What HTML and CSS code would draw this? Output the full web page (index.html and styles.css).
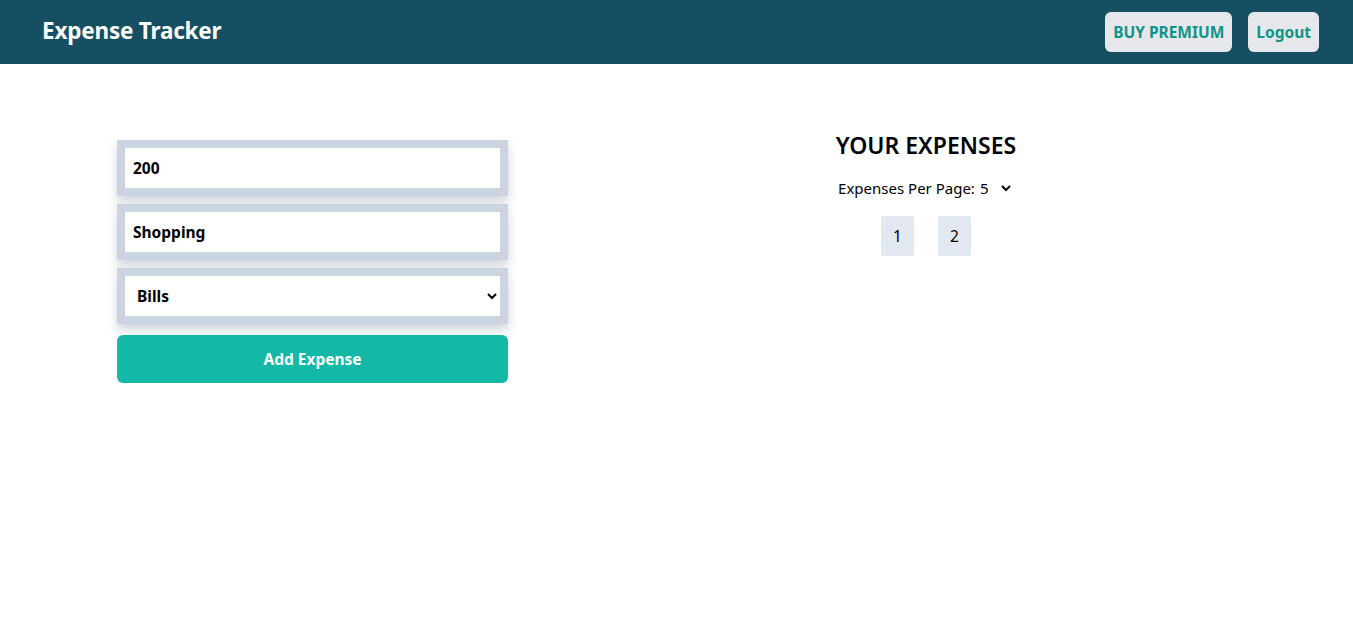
FILE: index.html
```html
<!DOCTYPE html>
<html lang="en">
<head>
<meta charset="utf-8">
<title>Expense Tracker</title>
<link rel="stylesheet" href="styles.css">
</head>
<body>
<header class="topbar">
  <h1 class="brand">Expense Tracker</h1>
  <div class="actions">
    <button class="nav-btn">BUY PREMIUM</button>
    <button class="nav-btn">Logout</button>
  </div>
</header>
<main class="content">
  <form class="expense-form">
    <div class="field"><input class="field-input" type="text" value="200"></div>
    <div class="field"><input class="field-input" type="text" value="Shopping"></div>
    <div class="field">
      <select class="field-input field-select">
        <option>Bills</option>
        <option>Food</option>
        <option>Shopping</option>
      </select>
    </div>
    <button type="button" class="add-btn">Add Expense</button>
  </form>
  <section class="expenses">
    <h2 class="expenses-title">YOUR EXPENSES</h2>
    <label class="per-page">Expenses Per Page:<select class="per-page-select">
        <option>5</option>
        <option>10</option>
      </select></label>
    <div class="pager">
      <button class="page-btn">1</button>
      <button class="page-btn">2</button>
    </div>
  </section>
</main>
</body>
</html>
```

FILE: styles.css
```css
* { box-sizing: border-box; }
body {
  margin: 0;
  font-family: "Noto Sans", "Open Sans", sans-serif;
  color: #000;
  background: #fff;
}
.topbar {
  height: 64px;
  background: #174f62;
  display: flex;
  align-items: center;
  justify-content: space-between;
  padding: 0 34px 0 42px;
}
.brand {
  margin: 0;
  color: #fff;
  font-size: 22.5px;
  font-weight: 700;
  letter-spacing: -0.2px;
  margin-top: -4px;
}
.actions {
  display: flex;
  gap: 16px;
}
.nav-btn {
  height: 40px;
  padding: 0 8px;
  border: none;
  border-radius: 6px;
  background: #e5e7eb;
  color: #0f9488;
  font-family: inherit;
  font-size: 15.5px;
  font-weight: 700;
}
.content {
  display: flex;
  padding: 76px 9px 0 117px;
}
.expense-form {
  width: 391px;
  display: flex;
  flex-direction: column;
  gap: 8px;
}
.field {
  background: #cbd5e1;
  padding: 8px;
  box-shadow: 0 6px 10px rgba(100, 116, 139, 0.3);
}
.field-input {
  display: block;
  width: 100%;
  height: 40px;
  border: none;
  outline: none;
  padding: 0 8px;
  font-family: inherit;
  font-size: 15.5px;
  font-weight: 700;
  color: #000;
  background: #fff;
}
.field-select {
  padding: 0 6px 0 8px;
}
.add-btn {
  margin-top: 3px;
  height: 48px;
  border: none;
  border-radius: 6px;
  background: #14b8a6;
  color: #fff;
  font-family: inherit;
  font-size: 15.5px;
  font-weight: 700;
}
.expenses {
  flex: 1;
  display: flex;
  flex-direction: column;
  align-items: center;
}
.expenses-title {
  margin: -12px 0 0;
  font-size: 23px;
  font-weight: 600;
  line-height: 1.5;
}
.per-page {
  margin-top: 14px;
  font-size: 15px;
}
.per-page-select {
  border: none;
  background: transparent;
  font-family: inherit;
  font-size: 15px;
  padding: 0;
  margin-left: 1px;
}
.pager {
  margin-top: 17px;
  display: flex;
  gap: 24px;
}
.page-btn {
  width: 33px;
  height: 40px;
  border: none;
  border-radius: 2px;
  background: #e2e8f0;
  font-family: inherit;
  font-size: 15.5px;
  color: #000;
}
```
